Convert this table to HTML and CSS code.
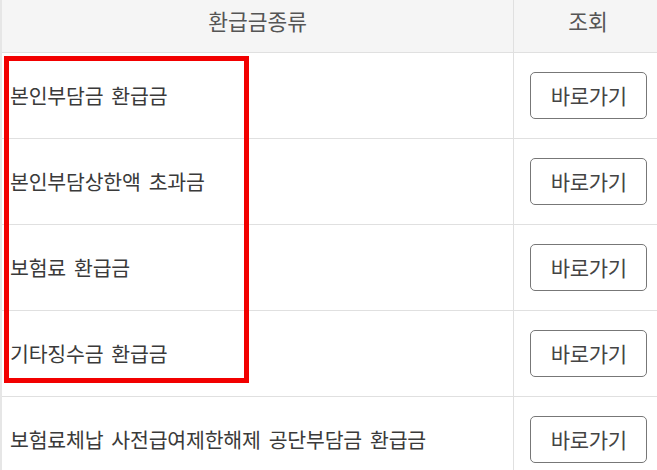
FILE: index.html
```html
<!DOCTYPE html>
<html lang="ko">
<head>
<meta charset="utf-8">
<link rel="stylesheet" href="styles.css">
</head>
<body>
<div class="wrap">
  <table class="refund">
    <thead>
      <tr><th class="c-type">환급금종류</th><th class="c-view">조회</th></tr>
    </thead>
    <tbody>
      <tr><td class="c-type">본인부담금 환급금</td><td class="c-view"><button class="go">바로가기</button></td></tr>
      <tr><td class="c-type">본인부담상한액 초과금</td><td class="c-view"><button class="go">바로가기</button></td></tr>
      <tr><td class="c-type">보험료 환급금</td><td class="c-view"><button class="go">바로가기</button></td></tr>
      <tr><td class="c-type">기타징수금 환급금</td><td class="c-view"><button class="go">바로가기</button></td></tr>
      <tr><td class="c-type">보험료체납 사전급여제한해제 공단부담금 환급금</td><td class="c-view"><button class="go">바로가기</button></td></tr>
    </tbody>
  </table>
  <div class="highlight"></div>
</div>
</body>
</html>
```
FILE: styles.css
```css
html, body {
  margin: 0;
  padding: 0;
  background: #fff;
  overflow: hidden;
}
.wrap {
  position: relative;
  width: 657px;
  font-family: "Noto Sans CJK KR", "Noto Sans", sans-serif;
}
.refund {
  width: 662px;
  border-collapse: collapse;
  table-layout: fixed;
  border-left: 2px solid #e6e6e6;
}
.refund th {
  box-sizing: border-box;
  height: 52px;
  background: #f5f5f5;
  color: #555;
  font-size: 21.5px;
  font-weight: 400;
  line-height: 1;
  text-align: center;
  border-bottom: 1px solid #e0e0e0;
  padding: 0 0 10px;
}
.refund td {
  height: 85px;
  border-bottom: 1px solid #e0e0e0;
  padding: 0;
  vertical-align: middle;
}
.refund .c-type {
  width: 512px;
  border-right: 1px solid #e0e0e0;
}
.refund td.c-type {
  padding-left: 8px;
  color: #3a3a3a;
  font-size: 20.5px;
  letter-spacing: -0.2px;
  word-spacing: 2.5px;
}
.refund .c-view {
  width: 148px;
}
.refund td.c-view {
  padding-left: 16px;
  text-align: left;
}
.go {
  width: 117px;
  height: 47px;
  border: 1px solid #777;
  border-radius: 5px;
  background: #fff;
  color: #444;
  font-family: "Noto Sans CJK KR", "Noto Sans", sans-serif;
  font-size: 21px;
  letter-spacing: -0.3px;
  padding: 0;
}
.highlight {
  position: absolute;
  left: 4px;
  top: 56px;
  width: 235px;
  height: 317px;
  border: 5px solid #f20000;
}
```
